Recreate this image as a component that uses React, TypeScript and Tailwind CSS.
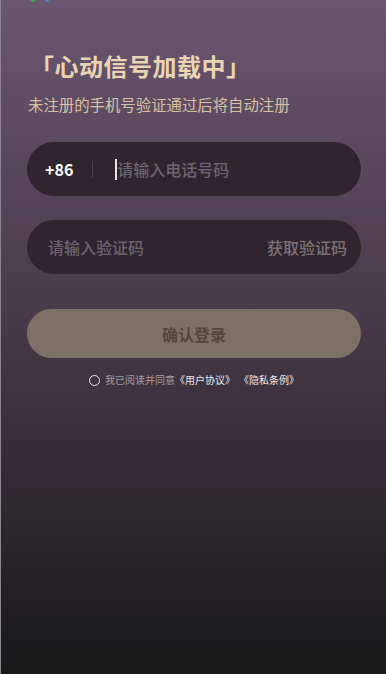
import React from "react";

export default function App() {
  const font = { fontFamily: '"Noto Sans CJK SC", "Noto Sans", sans-serif' };
  return (
    <div
      className="w-full h-[674px] flex flex-col pl-[26px] pr-[25px] bg-gradient-to-b from-[#6b5672] via-[#463846] to-[#19191a] border-l border-[#8a8590] overflow-hidden"
      style={font}
    >
      <div className="flex gap-[9px] pl-[3px] -mt-[1px] h-[3px]">
        <span className="w-[6px] h-[3px] rounded-b-sm bg-[#3aa84a]" />
        <span className="w-[4px] h-[3px] rounded-b-sm bg-[#4a86c8]" />
      </div>
      <h1 className="mt-[48px] ml-[3px] text-[24px] leading-[32px] font-bold text-[#ead4b2] tracking-[0.5px]">
        「心动信号加载中」
      </h1>
      <p className="mt-[11px] ml-[1px] text-[15.4px] leading-[22px] text-[#d8c0a3]">
        未注册的手机号验证通过后将自动注册
      </p>

      <div className="mt-[27px] h-[54px] rounded-full bg-[#30252f] flex items-center pl-[18px]">
        <span className="text-white font-bold text-[16px]">+86</span>
        <span className="ml-[19px] w-px h-[17px] bg-[#4d434c]" />
        <span className="ml-[22px] w-[2px] h-[21px] bg-[#e8e4ea]" />
        <span className="text-[16px] text-[#6c6470] font-medium">请输入电话号码</span>
      </div>

      <div className="mt-[24px] h-[54px] rounded-full bg-[#30252f] flex items-center justify-between pl-[21px] pr-[14px]">
        <span className="text-[16px] text-[#6c6470] font-medium">请输入验证码</span>
        <span className="text-[16px] text-[#7a7176] font-medium">获取验证码</span>
      </div>

      <div className="mt-[35px] h-[49px] rounded-full bg-[#7d7067] flex items-center justify-center">
        <span className="text-[16px] font-bold text-[#54463c]">确认登录</span>
      </div>

      <div className="mt-[15px] flex items-center justify-center text-[10px] leading-[14px]">
        <span className="w-[11px] h-[11px] rounded-full border border-[#e6e2e8] mr-[5px]" />
        <span className="text-[#a59ca6]">我已阅读并同意</span>
        <span className="text-[#ece8ee]">《用户协议》</span>
        <span className="text-[#ece8ee] ml-[4px]">《隐私条例》</span>
      </div>
    </div>
  );
}
